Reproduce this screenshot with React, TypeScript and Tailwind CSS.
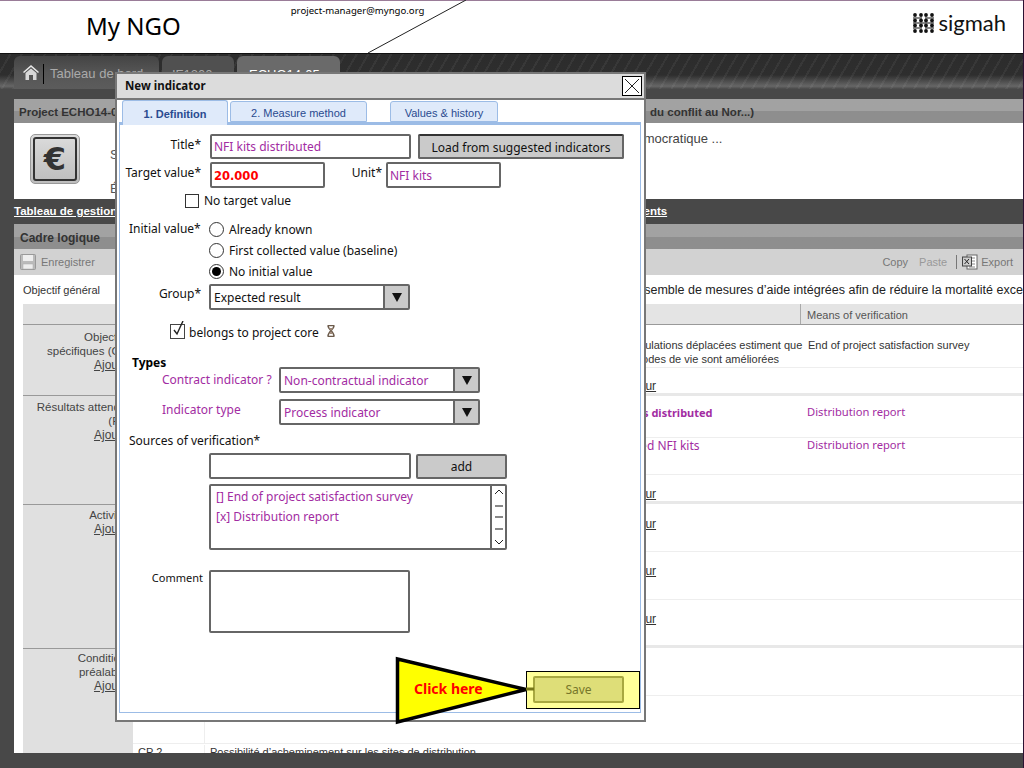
import React from 'react';

const hand = "font-['Noto_Sans',sans-serif]";
const purple = 'text-[#a22ca2]';

const Select = ({ value, className, text }: { value: string; className: string; text: string }) => (
  <div className={`flex h-[26px] border-2 border-[#666] rounded-[2px] bg-white ${className}`}>
    <div className={`flex-1 pl-[3px] leading-[23px] whitespace-nowrap ${text}`}>{value}</div>
    <div className="w-[25px] bg-[#cacaca] border-l-2 border-[#666] flex items-center justify-center">
      <svg width="10" height="9" viewBox="0 0 10 9"><path d="M0 0h10L5 9z" fill="#111" /></svg>
    </div>
  </div>
);

const Radio = ({ label, on }: { label: string; on?: boolean }) => (
  <div className="h-[21px] flex items-center pl-[89px]">
    <div className="w-[15px] h-[15px] rounded-full border-[1.5px] border-[#333] bg-white flex items-center justify-center">
      {on && <div className="w-[9px] h-[9px] rounded-full bg-black" />}
    </div>
    <span className="ml-[5px] whitespace-nowrap">{label}</span>
  </div>
);

const rows = [
  { h: 'h-[43px] border-b border-[#eee]', kind: 'os' },
  { h: 'h-[28px] border-b-[3px] border-[#e8e8e8]', kind: 'add', pad: 'pt-[11px]' },
  { h: 'h-[42px] border-b border-[#eee]', kind: 'ra1' },
  { h: 'h-[38px] border-b border-[#eee]', kind: 'ra2' },
  { h: 'h-[29px] border-b-[3px] border-[#e8e8e8]', kind: 'add', pad: 'pt-[12px]' },
  { h: 'h-[48px] border-b border-[#eee]', kind: 'add', pad: 'pt-[13px]' },
  { h: 'h-[48px] border-b border-[#eee]', kind: 'add', pad: 'pt-[12px]' },
  { h: 'h-[48px] border-b-[3px] border-[#e8e8e8]', kind: 'add', pad: 'pt-[12px]' },
  { h: 'h-[48px] border-b border-[#eee]', kind: 'none' },
  { h: 'h-[48px] border-b border-[#eee]', kind: 'none' },
];

const sections = [
  { cls: 'h-[71px] border-b border-[#999] pt-[5px]', lines: ['Objectifs\u00a0', 'spécifiques (OS)'] },
  { cls: 'h-[109px] border-b border-[#999] pt-[4px]', lines: ['Résultats attendus', '(RA)'] },
  { cls: 'h-[144px] border-b border-[#999] pt-[3px]', lines: ['Activités'] },
  { cls: 'h-[110px] pt-[2px]', lines: ['Conditions', 'préalables'] },
];

const SigmahMark = () => (
  <svg width="21" height="20" viewBox="0 0 21 20">
    {[2, 8, 13, 19].map((x) => [2, 7.5, 12.5, 18].map((y) => <circle key={`${x}-${y}`} cx={x} cy={y} r="1.9" fill="#111" />))}
    <path d="M0 5h9M0 15h9M12 5h9M12 15h9M0 10h21" stroke="#111" strokeWidth="1" />
  </svg>
);

const App: React.FC = () => {
  return (
    <div className="relative w-[1024px] h-[768px] overflow-hidden bg-[#484848] font-['Liberation_Sans',sans-serif] text-[12px] text-[#333]">
      {/* header */}
      <div className="h-[54px] bg-white border-t border-[#9a7c98] border-b border-b-[#111] flex">
        <div className={`${hand} ml-[86px] mt-[8px] text-[24px] leading-[34px] text-black`}>My NGO</div>
        <div className={`${hand} ml-[110px] mt-[2px] text-[9.6px] leading-[16px] text-black`}>project-manager@myngo.org</div>
        <div className="ml-auto mr-[18px] mt-[12px] flex items-start gap-[4px]">
          <SigmahMark />
          <span className="font-['Lato',sans-serif] text-[22px] leading-[20px] text-[#111]">sigmah</span>
        </div>
      </div>

      {/* tab bar */}
      <div className="h-[35px] pl-[14px] pt-[2px] flex gap-[3px] [background-image:repeating-linear-gradient(120deg,transparent_0,transparent_8px,rgba(255,255,255,0.05)_8px,rgba(255,255,255,0.05)_10px),linear-gradient(180deg,#2c2c2c_0,#2e2e2e_60%,#666_92%,#484848_100%)]">
        <div className="w-[145px] h-[33px] rounded-t-[6px] bg-gradient-to-b from-[#444] via-[#555] to-[#5c5c5c] flex items-start pt-[8px] pl-[9px] text-[#aaa] text-[13px]">
          <svg width="16" height="17" viewBox="0 0 16 17" className="shrink-0">
            <path d="M8 1 0 8l1 1 7-6 7 6 1-1z" fill="#e8e8e8" />
            <path d="M2.5 9 8 4.5 13.5 9v7H10v-5H6v5H2.5z" fill="#d8d8d8" />
          </svg>
          <div className="w-px h-[20px] bg-black ml-[4px] mr-[6px]" />
          <span className="whitespace-nowrap">Tableau de bord</span>
        </div>
        <div className="w-[72px] h-[33px] rounded-t-[6px] bg-[#505050] pl-[10px] pt-[9px] text-[#aaa] text-[13px]">IF1200</div>
        <div className="w-[103px] h-[33px] rounded-t-[6px] bg-[#6a6a6a] pl-[12px] pt-[9px] text-white text-[13px] whitespace-nowrap">ECHO14-05</div>
      </div>

      {/* page body */}
      <div className="mt-[10px] ml-[14px] mr-px">
        <div className="h-[24px] flex bg-gradient-to-b from-[#a2a2a2] from-50% to-[#8e8e8e] to-50% pl-[5px] font-bold text-[11.5px] leading-[27px] whitespace-nowrap">
          <span className="w-[631px] shrink-0 overflow-hidden">Project ECHO14-05 (Appui aux populations affectées par la crise humanitaire résultant</span>
          <span>du conflit au Nor...)</span>
        </div>
        <div className="h-[76px] bg-white flex">
          <div className="ml-[16px] mt-[11px] w-[50px] h-[50px] rounded-[5px] border border-[#999] bg-gradient-to-b from-[#dcdcdc] to-[#bdbdbd] p-[2px]">
            <div className="w-full h-full border-2 border-[#333] rounded-[3px] flex items-center justify-center font-['DejaVu_Sans',sans-serif] font-bold text-[32px] text-[#333]">€</div>
          </div>
          <div className="ml-[30px] pt-[15px] text-[13px] text-[#555] leading-[34px]">
            <div>Secteur</div>
            <div>Échéance</div>
          </div>
          <div className="ml-[392px] mt-[6px] text-[13px] text-[#444] whitespace-nowrap">République démocratique ...</div>
        </div>
        <div className="h-[25px] font-bold text-[11.5px] text-white leading-[25px] whitespace-nowrap">
          <a className="underline">Tableau de gestion</a>
          <a className="underline ml-[330px]">Cadre logique / Indicateurs / Documents</a>
        </div>
        <div className="h-[25px] bg-gradient-to-b from-[#a2a2a2] from-50% to-[#8e8e8e] to-50% pl-[6px] font-bold leading-[28px]">Cadre logique</div>
        <div className="h-[26px] bg-[#d2d2d2] flex items-center pl-[6px] text-[#777]">
          <svg width="16" height="16" viewBox="0 0 16 16">
            <rect x="0.5" y="0.5" width="15" height="15" rx="1" fill="#bbb" stroke="#999" />
            <rect x="3" y="1" width="10" height="6" fill="#eee" />
            <rect x="3" y="10" width="10" height="5" fill="#eee" stroke="#aaa" strokeWidth="0.5" />
          </svg>
          <span className="ml-[5px] text-[11px]">Enregistrer</span>
          <span className="ml-auto text-[11px]">Copy</span>
          <span className="ml-[11px] text-[11px] text-[#999]">Paste</span>
          <div className="w-px h-[14px] bg-[#777] ml-[9px]" />
          <svg width="16" height="16" viewBox="0 0 16 16" className="ml-[5px]">
            <rect x="5" y="1" width="10" height="14" fill="#fff" stroke="#666" />
            <path d="M7 4h6M7 7h6M7 10h6M7 13h6" stroke="#888" />
            <rect x="0.5" y="3" width="9" height="9" fill="#ccc" stroke="#444" />
            <path d="m2.5 5 4.5 5M7 5l-4.500 5" stroke="#222" />
          </svg>
          <span className="ml-[3px] mr-[10px] text-[11px]">Export</span>
        </div>

        {/* logical framework */}
        <div className="h-[478px] bg-white overflow-hidden">
          <div className="h-[29px] flex whitespace-nowrap leading-[30px]">
            <div className="ml-[9px] w-[362px] shrink-0 text-[11px]">Objectif général</div>
            <div className="text-[#222] text-[12.5px]">Mettre en oeuvre dans la région du Nord un ensemble de mesures d’aide intégrées afin de réduire la mortalité excessive</div>
          </div>
          <div className="flex">
            <div className="ml-[9px] w-[110px] shrink-0 bg-[#e0e0e0] text-right text-[11.5px] pr-px text-[#444]">
              <div className="h-[21px] border-b border-[#999] -mr-px" />
              {sections.map((s) => (
                <div key={s.lines[0]} className={`${s.cls} leading-[14px] -mr-px pr-px`}>
                  {s.lines.map((l) => <div key={l} className="whitespace-nowrap">{l}</div>)}
                  <a className="underline text-[12px]">Ajouter</a>
                </div>
              ))}
            </div>
            <div className="flex-1 min-w-0">
              <div className="h-[21px] bg-[#e4e4e4] border-b border-[#999] flex text-[#555]">
                <div className="ml-[667px] border-l border-[#aaa] pl-[6px] leading-[22px] text-[11px] whitespace-nowrap">Means of verification</div>
              </div>
              {rows.map((r, i) => (
                <div key={i} className={`${r.h} ${r.pad || ''}`}>
                  {r.kind === 'os' && (
                    <div className="flex pt-[13px] leading-[14px] text-[11px]">
                      <div className="ml-[473px] w-[202px] shrink-0 whitespace-nowrap">Les populations déplacées estiment que<br />leurs modes de vie sont améliorées</div>
                      <div className="whitespace-nowrap">End of project satisfaction survey</div>
                    </div>
                  )}
                  {r.kind === 'add' && <div className="ml-[413px] leading-[14px]"><a className="underline text-[#333]">Ajouter un indicateur</a></div>}
                  {r.kind === 'ra1' && (
                    <div className={`${hand} ${purple} flex pt-[8px] whitespace-nowrap`}>
                      <div className="ml-[473px] w-[201px] shrink-0 font-bold text-[11px] leading-[18px]">NFI kits distributed</div>
                      <div className="text-[11.2px]">Distribution report</div>
                    </div>
                  )}
                  {r.kind === 'ra2' && (
                    <div className={`${hand} ${purple} flex -mt-px whitespace-nowrap`}>
                      <div className="ml-[458px] w-[216px] shrink-0">Distributed NFI kits</div>
                      <div className="text-[11.2px]">Distribution report</div>
                    </div>
                  )}
                  {r.kind === 'none' && <div className="ml-[71px] h-full border-l border-[#eee]" />}
                </div>
              ))}
              <div className="flex leading-[14px] text-[11px] pt-px whitespace-nowrap">
                <div className="w-[71px] pl-[5px]">CP 2 &nbsp;—</div>
                <div className="border-l border-[#eee] pl-[5px]">Possibilité d’acheminement sur les sites de distribution</div>
              </div>
            </div>
          </div>
        </div>
      </div>
      <div className="absolute right-0 top-0 w-px h-full bg-[#2b1233]" />

      {/* line from the e-mail callout */}
      <svg className="absolute left-[365px] top-0" width="104" height="54" viewBox="0 0 104 54">
        <path d="M101 0 3 53" stroke="#222" fill="none" />
      </svg>

      {/* dialog */}
      <div className={`${hand} absolute left-[115px] top-[72px] w-[531px] h-[650px] bg-white border-2 border-[#777] text-[12px] text-[#111]`}>
        <div className="h-[26px] bg-[#dcdcdc] border-b-2 border-[#777] flex items-center pl-[8px] font-bold text-[11.5px]">
          New indicator
          <div className="ml-auto mr-[2px] w-[20px] h-[20px] bg-white border border-black flex items-center justify-center">
            <svg width="16" height="16" viewBox="0 0 16 16"><path d="m1 1 14 14M15 1 1 15" stroke="#222" /></svg>
          </div>
        </div>
        <div className="h-[22px] pl-[5px] flex items-end font-['Liberation_Sans',sans-serif] text-[11px] text-[#2a4a90] relative z-10">
          <div className="w-[106px] h-[25px] -mb-[3px] bg-[#dfeafa] border border-b-0 border-[#9cbce6] rounded-t-[3px] text-center leading-[26px] font-bold">1. Definition</div>
          <div className="ml-[2px] w-[137px] h-[21px] bg-[#dfeafa] border border-[#9cbce6] rounded-t-[3px] text-center leading-[22px]">2. Measure method</div>
          <div className="ml-[23px] w-[108px] h-[21px] bg-[#dfeafa] border border-[#9cbce6] rounded-t-[3px] text-center leading-[22px]">Values &amp; history</div>
        </div>
        <div className="mx-[2px] w-[522px] h-[591px] border border-t-[3px] border-[#9cbce6]">
          <div className="flex mt-[9px] h-[25px]">
            <div className="w-[81px] text-right leading-[22px]">Title*</div>
            <div className={`ml-[9px] w-[201px] border-2 border-[#666] rounded-[2px] pl-[2px] leading-[21px] ${purple}`}>NFI kits distributed</div>
            <div className="ml-[7px] w-[206px] bg-[#cacaca] border-2 border-[#666] border-t-[#333] rounded-[2px] text-center leading-[23px] whitespace-nowrap">Load from suggested indicators</div>
          </div>
          <div className="flex mt-[3px] h-[26px]">
            <div className="w-[81px] text-right leading-[22px] whitespace-nowrap">Target value*</div>
            <div className="ml-[9px] w-[115px] border-2 border-[#666] rounded-[2px] pl-[2px] leading-[24px] text-[#f00] font-bold font-['DejaVu_Sans',sans-serif] text-[11.5px]">20.000</div>
            <div className="w-[57px] text-right leading-[22px]">Unit*</div>
            <div className={`ml-[4px] w-[115px] border-2 border-[#666] rounded-[2px] pl-[2px] leading-[24px] ${purple}`}>NFI kits</div>
          </div>
          <div className="flex items-center mt-[6px] h-[14px] pl-[65px]">
            <div className="w-[14px] h-[14px] border-[1.5px] border-[#333]" />
            <span className="ml-[5px]">No target value</span>
          </div>
          <div className="relative mt-[11px]">
            <div className="absolute left-[9px] top-[1px] leading-[18px] whitespace-nowrap">Initial value*</div>
            <Radio label="Already known" />
            <Radio label="First collected value (baseline)" />
            <Radio label="No initial value" on />
          </div>
          <div className="flex mt-[2px]">
            <div className="w-[81px] text-right leading-[20px]">Group*</div>
            <Select value="Expected result" className="ml-[8px] w-[201px]" text="" />
          </div>
          <div className="flex items-center mt-[13px] h-[16px] pl-[50px]">
            <div className="relative w-[15px] h-[15px] border-[1.5px] border-[#444]">
              <svg className="absolute -top-[4px] left-0" width="15" height="16" viewBox="0 0 15 16"><path d="m3 9 3 4 6-13" stroke="#222" strokeWidth="1.4" fill="none" /></svg>
            </div>
            <span className="ml-[4px] pt-[3px] whitespace-nowrap">belongs to project core</span>
            <svg className="ml-[8px]" width="8" height="12" viewBox="0 0 8 12">
              <path d="M0.500 0.500h7M0.500 11.500h7M1 1c0 3 6 6 6 10M7 1c0 3-6 6-6 10" stroke="#6b5a4a" strokeWidth="1.5" fill="none" />
              <path d="M2 3h4L2 9h4z" fill="#a08a7a" />
            </svg>
          </div>
          <div className="mt-[16px] h-[12px] pl-[12px] font-bold leading-[16px] text-black">Types</div>
          <div className="flex h-[26px]">
            <div className={`w-[159px] pl-[42px] leading-[26px] whitespace-nowrap ${purple}`}>Contract indicator ?</div>
            <Select value="Non-contractual indicator" className="w-[201px]" text={purple} />
          </div>
          <div className="flex h-[26px] mt-[6px]">
            <div className={`w-[159px] pl-[42px] leading-[22px] whitespace-nowrap ${purple}`}>Indicator type</div>
            <Select value="Process indicator" className="w-[201px]" text={purple} />
          </div>
          <div className="mt-[9px] pl-[9px] h-[14px] leading-[14px] whitespace-nowrap">Sources of verification*</div>
          <div className="flex mt-[5px] pl-[89px] h-[26px]">
            <div className="w-[202px] border-2 border-[#666] rounded-[2px]" />
            <div className="ml-[5px] mt-px w-[91px] bg-[#cacaca] border-2 border-[#666] rounded-[2px] text-center leading-[22px]">add</div>
          </div>
          <div className={`flex ml-[89px] mt-[5px] w-[298px] h-[66px] border-2 border-[#666] rounded-[2px] ${purple}`}>
            <div className="flex-1 pl-[5px] pt-[1px] leading-[20px]">
              <div>[] End of project satisfaction survey</div>
              <div>[x] Distribution report</div>
            </div>
            <div className="w-[15px] border-l-2 border-[#666] flex flex-col items-center justify-between py-[3px]">
              <svg width="10" height="6" viewBox="0 0 10 6"><path d="m1 5 4-4 4 4" stroke="#222" fill="none" /></svg>
              <div className="w-[8px] h-[2px] bg-[#888]" />
              <div className="w-[8px] h-[2px] bg-[#888]" />
              <div className="w-[8px] h-[2px] bg-[#888]" />
              <svg width="10" height="6" viewBox="0 0 10 6"><path d="m1 1 4 4 4-4" stroke="#222" fill="none" /></svg>
            </div>
          </div>
          <div className="flex mt-[20px]">
            <div className="w-[83px] text-right text-[11px] leading-[16px]">Comment</div>
            <div className="ml-[6px] w-[201px] h-[63px] border-2 border-[#666] rounded-[2px]" />
          </div>
        </div>
      </div>

      {/* click here callout */}
      <div className="absolute left-[526px] top-[671px] w-[114px] h-[38px] bg-[#ffff99] border border-black pl-[6px] pt-[4px]">
        <div className={`${hand} w-[91px] h-[27px] bg-[#dede78] border-2 border-[#a8a840] rounded-[2px] text-center leading-[24px] text-[12px] text-[#77772a]`}>Save</div>
      </div>
      <svg className="absolute left-[394px] top-[655px]" width="142" height="72" viewBox="0 0 142 72">
        <path d="M3.500 4 132 34.500 3.500 67z" fill="#ffff00" stroke="#000" strokeWidth="3.500" />
        <path d="M132 34h8" stroke="#77771a" strokeWidth="3" />
      </svg>
      <div className={`${hand} absolute left-[414px] top-[680px] text-[14px] leading-[18px] font-bold text-[#f00] whitespace-nowrap`}>Click here</div>
    </div>
  );
};

export default App;
